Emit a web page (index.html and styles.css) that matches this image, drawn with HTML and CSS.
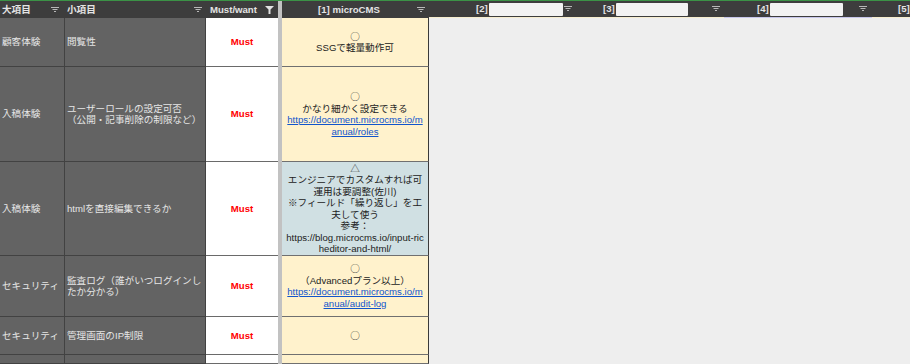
FILE: index.html
```html
<!DOCTYPE html>
<html lang="ja">
<head>
<meta charset="utf-8">
<title>CMS比較</title>
<link rel="stylesheet" href="styles.css">
</head>
<body>
<div class="sheet">
  <div class="divider"></div>

  <div class="hcell h-a"><span class="hlabel">大項目</span><svg class="filt" width="8" height="6" viewBox="0 0 8 6"><path d="M0 0.5H8M1.5 2.5H6.5M3 4.5H5" stroke="#b8b8b8" stroke-width="1"/></svg></div>
  <div class="hcell h-b"><span class="hlabel">小項目</span><svg class="filt" width="8" height="6" viewBox="0 0 8 6"><path d="M0 0.5H8M1.5 2.5H6.5M3 4.5H5" stroke="#b8b8b8" stroke-width="1"/></svg></div>
  <div class="hcell h-c"><span class="hlabel">Must/want</span><svg class="funnel" width="9" height="8" viewBox="0 0 9 8"><path d="M0 0H9L5.5 3.6V8H3.5V3.6Z" fill="#e2e2e2"/></svg></div>
  <div class="hcell h-d"><span class="hlabel">[1] microCMS</span><svg class="filt" width="8" height="6" viewBox="0 0 8 6"><path d="M0 0.5H8M1.5 2.5H6.5M3 4.5H5" stroke="#b8b8b8" stroke-width="1"/></svg></div>
  <div class="hcell h-e"><span class="hnum">[2]</span><span class="hbox"></span><svg class="filt" width="8" height="6" viewBox="0 0 8 6"><path d="M0 0.5H8M1.5 2.5H6.5M3 4.5H5" stroke="#b8b8b8" stroke-width="1"/></svg></div>
  <div class="hcell h-f"><span class="hnum">[3]</span><span class="hbox"></span><svg class="filt" width="8" height="6" viewBox="0 0 8 6"><path d="M0 0.5H8M1.5 2.5H6.5M3 4.5H5" stroke="#b8b8b8" stroke-width="1"/></svg></div>
  <div class="hcell h-g"><span class="hnum">[4]</span><span class="hbox"></span><svg class="filt" width="8" height="6" viewBox="0 0 8 6"><path d="M0 0.5H8M1.5 2.5H6.5M3 4.5H5" stroke="#b8b8b8" stroke-width="1"/></svg></div>
  <div class="hcell h-h"><span class="hnum">[5]</span></div>

  <div class="cell ca">顧客体験</div>
  <div class="cell cb">閲覧性</div>
  <div class="cell cc">Must</div>
  <div class="cell cd"><div><span class="mark">○</span><br>SSGで軽量動作可</div></div>

  <div class="cell ca">入稿体験</div>
  <div class="cell cb">ユーザーロールの設定可否<br>（公開・記事削除の制限など）</div>
  <div class="cell cc">Must</div>
  <div class="cell cd"><div><span class="mark">○</span><br>かなり細かく設定できる<br><a href="#">https://document.microcms.io/m<br>anual/roles</a></div></div>

  <div class="cell ca">入稿体験</div>
  <div class="cell cb">htmlを直接編集できるか</div>
  <div class="cell cc">Must</div>
  <div class="cell cd blue"><div><span class="mark">△</span><br>エンジニアでカスタムすれば可<br>運用は要調整(佐川)<br>※フィールド「繰り返し」を工<br>夫して使う<br>参考：<br>https://blog.microcms.io/input-ric<br>heditor-and-html/</div></div>

  <div class="cell ca">セキュリティ</div>
  <div class="cell cb">監査ログ（誰がいつログインし<br>たか分かる）</div>
  <div class="cell cc">Must</div>
  <div class="cell cd"><div><span class="mark">○</span><br>（Advancedプラン以上）<br><a href="#">https://document.microcms.io/m<br>anual/audit-log</a></div></div>

  <div class="cell ca">セキュリティ</div>
  <div class="cell cb">管理画面のIP制限</div>
  <div class="cell cc">Must</div>
  <div class="cell cd"><div><span class="mark">○</span></div></div>

  <div class="cell ca"></div>
  <div class="cell cb"></div>
  <div class="cell cc"></div>
  <div class="cell cd"></div>
</div>
</body>
</html>
```

FILE: styles.css
```css
html, body {
  margin: 0;
  padding: 0;
  background: #eeeeee;
}

.sheet {
  box-sizing: border-box;
  height: 364px;
  overflow: hidden;
  border-top: 1px solid #3b9246;
  background: #eeeeee;
  display: grid;
  grid-template-columns: 65px 141px 72px 4px 147px 147px 148px 148px 1fr;
  grid-template-rows: 17px 49px 95px 94px 61px 38px 1fr;
  font-family: "Liberation Sans", "Noto Sans CJK JP", sans-serif;
  font-size: 9.6px;
  line-height: 11.5px;
}

.divider {
  grid-column: 4;
  grid-row: 1 / -1;
  background: #c2c2c2;
}

.hcell {
  box-sizing: border-box;
  background: #3d3d3d;
  color: #e4e4e4;
  font-weight: bold;
  display: flex;
  align-items: center;
  white-space: nowrap;
  overflow: hidden;
}

.filt, .funnel {
  flex: none;
  margin-left: auto;
}

.h-a { grid-column: 1; padding-left: 2px; }
.h-a .filt { margin-right: 6px; }
.h-b { padding-left: 2px; }
.h-b .filt { margin-right: 4px; }
.h-c { padding-left: 4px; }
.h-c .funnel { margin-right: 4px; }
.h-d .hlabel { flex: 1; text-align: center; padding-left: 3px; }
.h-d .filt { margin-left: 4px; margin-right: 4px; }

.h-e, .h-f, .h-g, .h-h {
  border-bottom: 1px solid #f6edcf;
}
.h-g { border-bottom-color: #c7c6ea; }

.hbox {
  flex: none;
  width: 74px;
  height: 13px;
  margin-left: 1px;
  background: #f2f2f2;
  border-radius: 1px;
}

.h-e .hnum { margin-left: 47px; }
.h-e .filt { margin-left: 1px; margin-right: 5px; }
.h-f .hnum { margin-left: 27px; }
.h-f .hbox { width: 72px; }
.h-f .filt { margin-right: 4px; }
.h-g .hnum { margin-left: 33px; }
.h-g .hbox { width: 73px; }
.h-g .filt { margin-right: 5px; }
.h-h .hnum { margin-left: 26px; }

.cell {
  box-sizing: border-box;
  display: flex;
  align-items: center;
  overflow: hidden;
}

.ca, .cb {
  background: #636363;
  color: #e6e6e6;
  border-right: 1px solid #424242;
  border-bottom: 1px solid #424242;
  padding: 0 2px;
  white-space: nowrap;
}
.ca { grid-column: 1; }

.cc {
  background: #ffffff;
  border-bottom: 1px solid #6a6a6a;
  justify-content: center;
  color: #ff0000;
  font-weight: bold;
}

.cd {
  background: #fff2cc;
  border-right: 1px solid #3a3a3a;
  border-bottom: 1px solid #707070;
  justify-content: center;
  text-align: center;
  color: #222222;
  white-space: nowrap;
}
.cd.blue { background: #d0e0e3; }

.mark {
  font-family: "Noto Sans CJK JP", sans-serif;
  color: #333333;
}

.cd a {
  color: #1155cc;
  text-decoration: underline;
}
```
